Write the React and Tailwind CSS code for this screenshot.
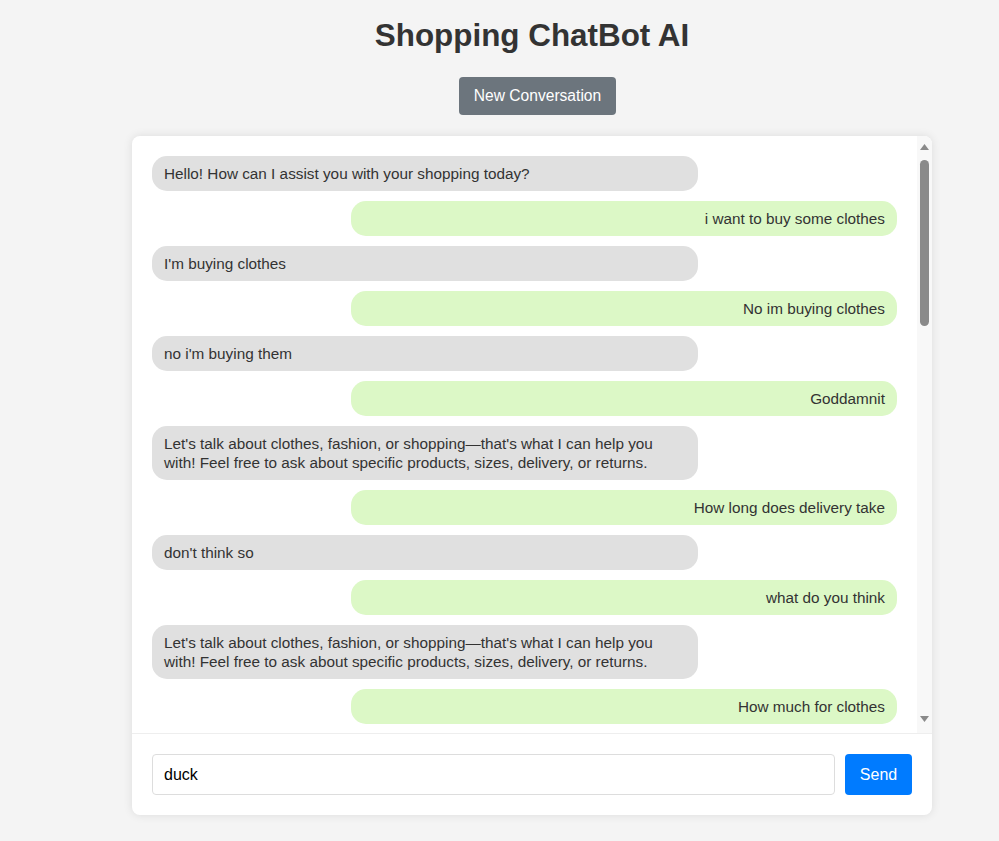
import React from "react";

const messages = [
  { from: "bot", text: "Hello! How can I assist you with your shopping today?" },
  { from: "user", text: "i want to buy some clothes" },
  { from: "bot", text: "I'm buying clothes" },
  { from: "user", text: "No im buying clothes" },
  { from: "bot", text: "no i'm buying them" },
  { from: "user", text: "Goddamnit" },
  { from: "bot", text: "Let's talk about clothes, fashion, or shopping—that's what I can help you with! Feel free to ask about specific products, sizes, delivery, or returns." },
  { from: "user", text: "How long does delivery take" },
  { from: "bot", text: "don't think so" },
  { from: "user", text: "what do you think" },
  { from: "bot", text: "Let's talk about clothes, fashion, or shopping—that's what I can help you with! Feel free to ask about specific products, sizes, delivery, or returns." },
  { from: "user", text: "How much for clothes" },
];

function Scrollbar() {
  return (
    <div className="w-[15px] shrink-0 bg-[#f8f8f8] flex flex-col items-center">
      <svg width="9" height="6" viewBox="0 0 9 6" className="mt-[8px]">
        <polygon points="4.5,0 9,6 0,6" fill="#8a8a8a" />
      </svg>
      <div className="mt-[10px] w-[9px] h-[166px] rounded-[5px] bg-[#8a8a8a]" />
      <div className="flex-1" />
      <svg width="9" height="6" viewBox="0 0 9 6" className="mb-[11px]">
        <polygon points="0,0 9,0 4.5,6" fill="#8a8a8a" />
      </svg>
    </div>
  );
}

export default function App() {
  return (
    <div
      className="min-h-[841px] bg-[#f4f4f4] text-[#333]"
      style={{ fontFamily: '"Liberation Sans", Arial, sans-serif' }}
    >
      <div className="ml-[132px] w-[800px] pt-[17px] flex flex-col items-center">
        <h1 className="text-[31.4px] font-bold leading-[37px] text-[#333]">Shopping ChatBot AI</h1>
        <button className="mt-[23px] h-[38px] px-[15px] rounded-[4px] bg-[#6c757d] text-white text-[15.6px] leading-[18px] ml-[11px]">
          New Conversation
        </button>
        <div className="mt-[21px] w-[800px] bg-white rounded-[8px] shadow-[0_0_10px_rgba(0,0,0,0.1)] flex flex-col overflow-hidden">
          <div className="h-[597px] flex">
            <div className="flex-1 overflow-hidden p-[20px] flex flex-col gap-[10px]">
              {messages.map((m, i) => (
                <div
                  key={i}
                  className={
                    m.from === "bot"
                      ? "w-[546px] shrink-0 self-start bg-[#e0e0e0] rounded-[15px] px-[12px] py-[8px] text-[15.3px] leading-[19px] text-[#333]"
                      : "w-[546px] shrink-0 self-end bg-[#dcf8c6] rounded-[15px] px-[12px] py-[8px] text-[15.3px] leading-[19px] text-[#333] text-right"
                  }
                >
                  {m.text}
                </div>
              ))}
            </div>
            <Scrollbar />
          </div>
          <div className="border-t border-[#eee] p-[20px] flex gap-[10px]">
            <input
              defaultValue="duck"
              className="flex-1 h-[41px] border border-[#ddd] rounded-[4px] px-[11px] text-[16px] text-black outline-none"
              style={{ fontFamily: '"Liberation Sans", Arial, sans-serif' }}
            />
            <button className="h-[41px] w-[67px] rounded-[4px] bg-[#007bff] text-white text-[16px]">
              Send
            </button>
          </div>
        </div>
      </div>
    </div>
  );
}
